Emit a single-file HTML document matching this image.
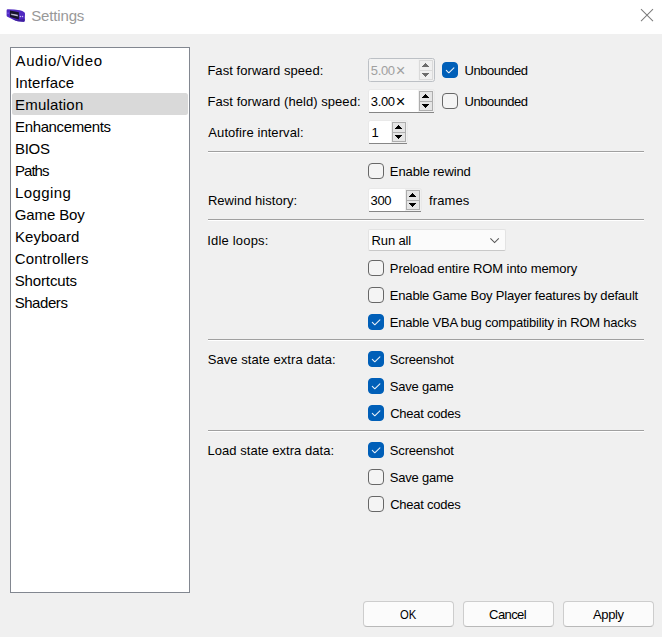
<!DOCTYPE html>
<html>
<head>
<meta charset="utf-8">
<title>Settings</title>
<style>
html,body{margin:0;padding:0;}
body{width:662px;height:637px;overflow:hidden;background:#f0f0f0;position:relative;
  font-family:"Liberation Sans",sans-serif;color:#000;}
.abs{position:absolute;}
.tx{position:absolute;white-space:nowrap;line-height:1;}
#titlebar{left:0;top:0;width:662px;height:34px;background:#fff;}
#list{left:10px;top:47px;width:178px;height:544px;border:1px solid #828790;background:#fff;}
#sel{left:12px;top:93px;width:176px;height:22px;background:#d9d9d9;border-radius:2.5px;}
.sep{position:absolute;left:208px;width:436px;height:1px;background:#a0a0a0;border-bottom:1px solid #fff;}
.cb{position:absolute;width:14px;height:14px;border:1px solid #676767;border-radius:4px;background:#f4f4f4;}
.cb.on{background:#005fb8;border-color:#005fb8;}
.cb svg{position:absolute;left:-1px;top:-1px;}
.spin{position:absolute;height:22px;border:1px solid #e9e9e9;border-radius:2.5px;}
.spin .wh{position:absolute;left:0;top:0;height:22px;background:#fff;border-radius:1.5px 0 0 1.5px;}
.spin:after{content:"";position:absolute;left:0;right:0;bottom:-1px;height:1px;background:#868686;}
.spin.dis{border-color:#bcc0c5;}
.spin.dis .wh{background:#f3f3f3;}
.spin.dis:after{display:none;}
.sb{position:absolute;width:12px;border:1px solid #adadad;background:#e5e5e5;}
.sb.up{top:1px;height:9px;}
.sb.dn{top:11px;height:8px;}
.spin.dis .sb{border-color:#dadada;background:#f0f0f0;}
.sb i{position:absolute;left:5px;width:1px;height:1px;background:#000;color:#000;}
.sb.up i{top:2px;box-shadow:-1px 1px,0 1px,1px 1px,-2px 2px,-1px 2px,0 2px,1px 2px,2px 2px,-3px 3px,-2px 3px,-1px 3px,0 3px,1px 3px,2px 3px,3px 3px;}
.sb.dn i{top:5px;box-shadow:-1px -1px,0 -1px,1px -1px,-2px -2px,-1px -2px,0 -2px,1px -2px,2px -2px,-3px -3px,-2px -3px,-1px -3px,0 -3px,1px -3px,2px -3px,3px -3px;}
.spin.dis .sb i{background:#6d6d6d;color:#6d6d6d;}
.btn{position:absolute;top:601px;width:89px;height:24px;border:1px solid #cdcdcd;border-bottom-color:#b9b9b9;border-radius:4px;background:#fbfbfb;}
#combo{left:368px;top:229px;width:136px;height:20px;border:1px solid #e3e3e3;border-bottom-color:#c9c9c9;background:#fbfbfb;border-radius:2px;}
</style>
</head>
<body>
<div id="titlebar" class="abs"></div>
<svg class="abs" style="left:0px;top:0px" width="34" height="34" viewBox="0 0 34 34">
  <path d="M6.6 10.4 Q6.6 9.2 7.8 9.2 L14 9.6 L19.9 10.3 Q22.5 11 24.3 12.3 Q25.1 13 25 14.2 L24.7 20.8 Q24.6 21.9 23.5 21.8 L17.8 21.3 Q15.5 20.8 12.5 19.3 L7.4 16.8 Q6.6 16.3 6.6 15.4 Z" fill="#5029c0"/>
  <path d="M17.8 21.3 L23.5 21.8 Q24.6 21.9 24.7 20.8 L24.8 18.6 Q21 19.8 17 19.6 L12.5 19.3 Q15.5 20.8 17.8 21.3 Z" fill="#3f1fa0"/>
  <path d="M10 10.4 L18.9 12.2 L18.9 19.5 L10 16.9 Z" fill="#17132b"/>
  <path d="M10.9 13.4 L18 14.8 L18 16.5 L10.9 14.9 Z" fill="#8a86a6"/>
  <path d="M11.6 13.9 L17.3 15.1 L17.3 15.9 L11.6 14.6 Z" fill="#d4d1e2"/>
  <circle cx="20.4" cy="16.5" r="0.75" fill="#c9bdf3"/><circle cx="22.5" cy="16.5" r="0.75" fill="#c9bdf3"/>
  <circle cx="8.1" cy="13.2" r="0.9" fill="#6f4be0"/>
</svg>
<svg class="abs" style="left:636px;top:4px" width="22" height="22" viewBox="0 0 22 22"><path d="M5 5.2 L17 17.2 M17 5.2 L5 17.2" stroke="#7c7c7c" stroke-width="1.05" fill="none"/></svg>

<div id="list" class="abs"></div>
<div id="sel" class="abs"></div>

<div class="spin dis" style="left:368px;top:58px;width:65px"><div class="wh" style="width:49px"></div><div class="sb up" style="left:50px"><i></i></div><div class="sb dn" style="left:50px"><i></i></div></div>
<div class="spin" style="left:368px;top:89px;width:65px"><div class="wh" style="width:49px"></div><div class="sb up" style="left:50px"><i></i></div><div class="sb dn" style="left:50px"><i></i></div></div>
<div class="spin" style="left:368px;top:120px;width:38px"><div class="wh" style="width:22px"></div><div class="sb up" style="left:23px"><i></i></div><div class="sb dn" style="left:23px"><i></i></div></div>
<div class="spin" style="left:368px;top:188px;width:52px"><div class="wh" style="width:36px"></div><div class="sb up" style="left:37px"><i></i></div><div class="sb dn" style="left:37px"><i></i></div></div>
<div class="cb on" style="left:442px;top:62px"><svg width="16" height="16" viewBox="0 0 16 16"><path d="M4.3 8.4 L6.8 10.8 L11.9 5.8" stroke="#fff" stroke-opacity="0.92" stroke-width="1.05" fill="none" stroke-linecap="round" stroke-linejoin="round"/></svg></div>
<div class="cb" style="left:442px;top:93px"></div>
<div class="cb" style="left:368px;top:163px"></div>
<div class="cb" style="left:368px;top:260px"></div>
<div class="cb" style="left:368px;top:287px"></div>
<div class="cb on" style="left:368px;top:314px"><svg width="16" height="16" viewBox="0 0 16 16"><path d="M4.3 8.4 L6.8 10.8 L11.9 5.8" stroke="#fff" stroke-opacity="0.92" stroke-width="1.05" fill="none" stroke-linecap="round" stroke-linejoin="round"/></svg></div>
<div class="cb on" style="left:368px;top:351px"><svg width="16" height="16" viewBox="0 0 16 16"><path d="M4.3 8.4 L6.8 10.8 L11.9 5.8" stroke="#fff" stroke-opacity="0.92" stroke-width="1.05" fill="none" stroke-linecap="round" stroke-linejoin="round"/></svg></div>
<div class="cb on" style="left:368px;top:378px"><svg width="16" height="16" viewBox="0 0 16 16"><path d="M4.3 8.4 L6.8 10.8 L11.9 5.8" stroke="#fff" stroke-opacity="0.92" stroke-width="1.05" fill="none" stroke-linecap="round" stroke-linejoin="round"/></svg></div>
<div class="cb on" style="left:368px;top:405px"><svg width="16" height="16" viewBox="0 0 16 16"><path d="M4.3 8.4 L6.8 10.8 L11.9 5.8" stroke="#fff" stroke-opacity="0.92" stroke-width="1.05" fill="none" stroke-linecap="round" stroke-linejoin="round"/></svg></div>
<div class="cb on" style="left:368px;top:442px"><svg width="16" height="16" viewBox="0 0 16 16"><path d="M4.3 8.4 L6.8 10.8 L11.9 5.8" stroke="#fff" stroke-opacity="0.92" stroke-width="1.05" fill="none" stroke-linecap="round" stroke-linejoin="round"/></svg></div>
<div class="cb" style="left:368px;top:469px"></div>
<div class="cb" style="left:368px;top:496px"></div>
<div class="sep" style="top:151px"></div>
<div class="sep" style="top:219px"></div>
<div class="sep" style="top:339px"></div>
<div class="sep" style="top:430px"></div>

<div id="combo" class="abs"></div>
<svg class="abs" style="left:486px;top:234px" width="18" height="12" viewBox="0 0 18 12"><path d="M4.4 4.4 L8.6 8.6 L12.8 4.4" stroke="#555" stroke-width="1.05" fill="none" stroke-linecap="butt" stroke-linejoin="miter"/></svg>

<div class="btn" style="left:363px"></div>
<div class="btn" style="left:463px"></div>
<div class="btn" style="left:563px"></div>

<div class="tx" id="l0" style="left:15.58px;top:53.10px;font-size:15px;letter-spacing:0.584px;color:#000">Audio/Video</div>
<div class="tx" id="l1" style="left:15.14px;top:75.10px;font-size:15px;letter-spacing:0.078px;color:#000">Interface</div>
<div class="tx" id="l2" style="left:15.07px;top:97.10px;font-size:15px;letter-spacing:0.185px;color:#000">Emulation</div>
<div class="tx" id="l3" style="left:15.07px;top:119.10px;font-size:15px;letter-spacing:-0.375px;color:#000">Enhancements</div>
<div class="tx" id="l4" style="left:15.07px;top:141.10px;font-size:15px;letter-spacing:-0.321px;color:#000">BIOS</div>
<div class="tx" id="l5" style="left:15.07px;top:163.10px;font-size:15px;letter-spacing:-0.986px;color:#000">Paths</div>
<div class="tx" id="l6" style="left:15.07px;top:185.10px;font-size:15px;letter-spacing:0.416px;color:#000">Logging</div>
<div class="tx" id="l7" style="left:14.76px;top:207.10px;font-size:15px;letter-spacing:-0.116px;color:#000">Game Boy</div>
<div class="tx" id="l8" style="left:15.07px;top:229.10px;font-size:15px;letter-spacing:-0.008px;color:#000">Keyboard</div>
<div class="tx" id="l9" style="left:14.74px;top:251.10px;font-size:15px;letter-spacing:0.113px;color:#000">Controllers</div>
<div class="tx" id="l10" style="left:14.64px;top:273.10px;font-size:15px;letter-spacing:-0.111px;color:#000">Shortcuts</div>
<div class="tx" id="l11" style="left:14.64px;top:295.10px;font-size:15px;letter-spacing:-0.429px;color:#000">Shaders</div>
<div class="tx" id="title" style="left:31.21px;top:8.10px;font-size:15px;letter-spacing:-0.147px;color:#999">Settings</div>
<div class="tx" id="a0" style="left:207.39px;top:63.90px;font-size:13px;letter-spacing:0.058px;color:#000">Fast forward speed:</div>
<div class="tx" id="a1" style="left:207.51px;top:94.80px;font-size:13px;letter-spacing:0.052px;color:#000">Fast forward (held) speed:</div>
<div class="tx" id="a2" style="left:208.33px;top:125.70px;font-size:13px;letter-spacing:0.075px;color:#000">Autofire interval:</div>
<div class="tx" id="a3" style="left:207.89px;top:193.50px;font-size:13px;letter-spacing:0.034px;color:#000">Rewind history:</div>
<div class="tx" id="a4" style="left:207.34px;top:234.20px;font-size:13px;letter-spacing:0.175px;color:#000">Idle loops:</div>
<div class="tx" id="a5" style="left:207.65px;top:352.90px;font-size:13px;letter-spacing:0.072px;color:#000">Save state extra data:</div>
<div class="tx" id="a6" style="left:207.51px;top:443.80px;font-size:13px;letter-spacing:0.037px;color:#000">Load state extra data:</div>
<div class="tx" id="u0" style="left:464.48px;top:63.90px;font-size:13px;letter-spacing:-0.472px;color:#000">Unbounded</div>
<div class="tx" id="u1" style="left:464.48px;top:94.80px;font-size:13px;letter-spacing:-0.472px;color:#000">Unbounded</div>
<div class="tx" id="c0" style="left:389.87px;top:164.60px;font-size:13px;letter-spacing:-0.119px;color:#000">Enable rewind</div>
<div class="tx" id="fr" style="left:429.10px;top:193.50px;font-size:13px;letter-spacing:0.110px;color:#000">frames</div>
<div class="tx" id="ra" style="left:371.59px;top:234.20px;font-size:13px;letter-spacing:-0.149px;color:#000">Run all</div>
<div class="tx" id="c1" style="left:389.87px;top:261.70px;font-size:13px;letter-spacing:-0.091px;color:#000">Preload entire ROM into memory</div>
<div class="tx" id="c2" style="left:389.87px;top:288.70px;font-size:13px;letter-spacing:-0.200px;color:#000">Enable Game Boy Player features by default</div>
<div class="tx" id="c3" style="left:389.87px;top:315.70px;font-size:13px;letter-spacing:-0.212px;color:#000">Enable VBA bug compatibility in ROM hacks</div>
<div class="tx" id="c4" style="left:389.86px;top:352.90px;font-size:13px;letter-spacing:-0.202px;color:#000">Screenshot</div>
<div class="tx" id="c5" style="left:389.86px;top:379.90px;font-size:13px;letter-spacing:-0.228px;color:#000">Save game</div>
<div class="tx" id="c6" style="left:390.17px;top:406.90px;font-size:13px;letter-spacing:-0.252px;color:#000">Cheat codes</div>
<div class="tx" id="c7" style="left:389.86px;top:443.80px;font-size:13px;letter-spacing:-0.202px;color:#000">Screenshot</div>
<div class="tx" id="c8" style="left:389.86px;top:470.80px;font-size:13px;letter-spacing:-0.228px;color:#000">Save game</div>
<div class="tx" id="c9" style="left:390.17px;top:497.80px;font-size:13px;letter-spacing:-0.252px;color:#000">Cheat codes</div>
<div class="tx" id="b0" style="left:400.30px;top:608.20px;font-size:13px;letter-spacing:0.000px;color:#000;transform:scaleX(0.865);transform-origin:0 0">OK</div>
<div class="tx" id="b1" style="left:489.10px;top:608.20px;font-size:13px;letter-spacing:-0.591px;color:#000">Cancel</div>
<div class="tx" id="b2" style="left:593.04px;top:608.20px;font-size:13px;letter-spacing:-0.378px;color:#000">Apply</div>
<div class="tx" id="s0" style="left:370.74px;top:63.90px;font-size:13px;letter-spacing:-0.313px;color:#a0a0a0">5.00</div>
<div class="tx" id="s1" style="left:370.81px;top:94.80px;font-size:13px;letter-spacing:-0.335px;color:#000">3.00</div>
<div class="tx" id="x0" style="left:395.84px;top:62.43px;font-size:16.5px;letter-spacing:0.000px;color:#a0a0a0">×</div>
<div class="tx" id="x1" style="left:395.84px;top:93.33px;font-size:16.5px;letter-spacing:0.000px;color:#000">×</div>
<div class="tx" id="s2" style="left:371.62px;top:125.70px;font-size:13px;letter-spacing:0.000px;color:#000">1</div>
<div class="tx" id="s3" style="left:370.51px;top:193.70px;font-size:13px;letter-spacing:-0.307px;color:#000">300</div>
</body>
</html>
